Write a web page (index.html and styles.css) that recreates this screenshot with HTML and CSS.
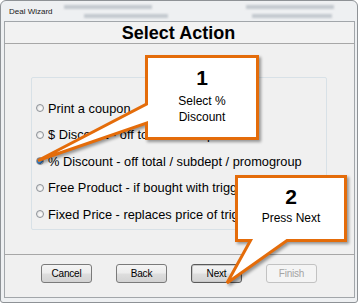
FILE: index.html
```html
<!DOCTYPE html>
<html>
<head>
<meta charset="utf-8">
<link rel="stylesheet" href="styles.css">
</head>
<body>
<div class="window">
  <div class="titlebar">
    <span class="title">Deal Wizard</span>
    <div class="blur blur-a"><i></i><i class="l2"></i></div>
    <div class="blur blur-b"><i></i><i class="l2"></i></div>
  </div>
  <div class="client">
    <div class="header">Select Action</div>
    <div class="main">
      <div class="group">
        <label class="opt"><span class="radio"></span>Print a coupon</label>
        <label class="opt"><span class="radio"></span>$ Discount - off total / subdept</label>
        <label class="opt"><span class="radio checked"></span>% Discount - off total / subdept / promogroup</label>
        <label class="opt"><span class="radio"></span>Free Product - if bought with trigger</label>
        <label class="opt"><span class="radio"></span>Fixed Price - replaces price of trigger</label>
      </div>
    </div>
    <div class="buttons">
      <button class="btn">Cancel</button>
      <button class="btn">Back</button>
      <button class="btn default">Next</button>
      <button class="btn disabled">Finish</button>
    </div>
  </div>
</div>

<svg class="callouts" width="360" height="305" viewBox="0 0 360 305">
  <path class="shape" d="M146.5,56.5 H257.5 V138.5 H146.5 V123 L38,160.5 L146.5,104 Z"/>
  <path class="shape" d="M236.5,176.5 H345.5 V240.5 H287 L227,283 L250.5,240.5 H236.5 Z"/>
</svg>

<div class="callout c1">
  <div class="num">1</div>
  <div class="txt">Select %<br>Discount</div>
</div>
<div class="callout c2">
  <div class="num">2</div>
  <div class="txt">Press Next</div>
</div>
</body>
</html>
```
FILE: styles.css
```css
html, body {
  margin: 0;
  padding: 0;
  background: #ffffff;
}
body {
  position: relative;
  width: 360px;
  height: 305px;
  overflow: hidden;
  font-family: "Liberation Sans", Arial, sans-serif;
}
.window {
  box-sizing: border-box;
  width: 358px;
  height: 303px;
  border: 1px solid #8e9296;
  border-radius: 6px 6px 3px 3px;
  background: #eef0f2;
  padding: 0 2px 4px 3px;
  display: flex;
  flex-direction: column;
}
.titlebar {
  height: 20px;
  position: relative;
  display: flex;
  align-items: center;
}
.title {
  font-size: 8px;
  color: #1a1a1a;
  padding-left: 5px;
  padding-top: 1px;
}
.blur {
  position: absolute;
  top: 4px;
  display: flex;
  flex-direction: column;
  gap: 5px;
  filter: blur(1.2px);
  opacity: 0.5;
}
.blur i {
  display: block;
  height: 4px;
  background: #9aa3ad;
}
.blur-a { left: 60px; }
.blur-a i { width: 88px; }
.blur-a i.l2 { width: 84px; margin-left: 20px; }
.blur-b { left: 242px; }
.blur-b i { width: 88px; }
.blur-b i.l2 { width: 80px; margin-left: 6px; }

.client {
  flex: 1;
  border: 1px solid #a2a6aa;
  background: #f0f0f0;
  display: flex;
  flex-direction: column;
}
.header {
  height: 21px;
  border-bottom: 1px solid #a7a7a7;
  background: #f2f2f2;
  text-align: center;
  font-weight: bold;
  font-size: 18px;
  line-height: 22px;
  color: #000;
  padding-right: 2px;
}
.main {
  flex: 1;
  padding: 33px 0 0 26px;
  border-bottom: 1px solid #a7a7a7;
}
.group {
  box-sizing: border-box;
  width: 296px;
  height: 153px;
  border: 1px solid #d8e1e7;
  border-radius: 2px;
  padding: 17px 0 0 4px;
  display: flex;
  flex-direction: column;
}
.opt {
  height: 26.5px;
  display: flex;
  align-items: center;
  gap: 4px;
  font-size: 12.8px;
  color: #000;
  white-space: nowrap;
}
.radio {
  box-sizing: border-box;
  width: 8px;
  height: 8px;
  border-radius: 50%;
  border: 1px solid #8d9298;
  background: radial-gradient(circle at 60% 60%, #ffffff 0%, #e8e8e8 60%, #cfcfcf 100%);
  flex: none;
}
.radio.checked {
  background: radial-gradient(circle at 45% 45%, #8fd0ff 0%, #2a7fd0 45%, #1b4f8f 70%, #e0e0e0 72%, #ffffff 100%);
}
.buttons {
  height: 33px;
  display: flex;
  align-items: flex-start;
  padding: 9px 0 0 36px;
  gap: 24px;
}
.btn {
  box-sizing: border-box;
  width: 51px;
  height: 19px;
  border: 1px solid #7a7a7a;
  border-radius: 3px;
  background: linear-gradient(#f4f4f4 0%, #ececec 48%, #dedede 52%, #d2d2d2 100%);
  font-family: "Liberation Sans", Arial, sans-serif;
  font-size: 10px;
  color: #000;
  padding: 0;
  letter-spacing: -0.2px;
}
.btn.default {
  border-color: #5a5a5a;
  box-shadow: inset 0 0 0 1px #c9c9c9;
}
.btn.disabled {
  border-color: #c2c2c2;
  background: #f4f4f4;
  color: #a4a4a4;
}

.callouts {
  position: absolute;
  left: 0;
  top: 0;
  pointer-events: none;
  filter: drop-shadow(2px 2px 1.5px rgba(0, 0, 0, 0.38));
}
.shape {
  fill: #ffffff;
  stroke: #e46c0a;
  stroke-width: 3;
  stroke-linejoin: miter;
  stroke-miterlimit: 3;
}
.callout {
  position: absolute;
  box-sizing: border-box;
  text-align: center;
  color: #000;
  font-family: "Liberation Sans", Arial, sans-serif;
}
.callout .num {
  font-size: 21px;
  font-weight: bold;
  line-height: 22px;
}
.callout .txt {
  font-size: 12px;
  line-height: 16px;
}
.c1 {
  left: 145px;
  top: 55px;
  width: 114px;
  height: 85px;
  padding-top: 12px;
}
.c1 .txt { margin-top: 4px; }
.c2 {
  left: 235px;
  top: 175px;
  width: 112px;
  height: 67px;
  padding-top: 11px;
}
.c2 .txt { margin-top: 2px; }
```
